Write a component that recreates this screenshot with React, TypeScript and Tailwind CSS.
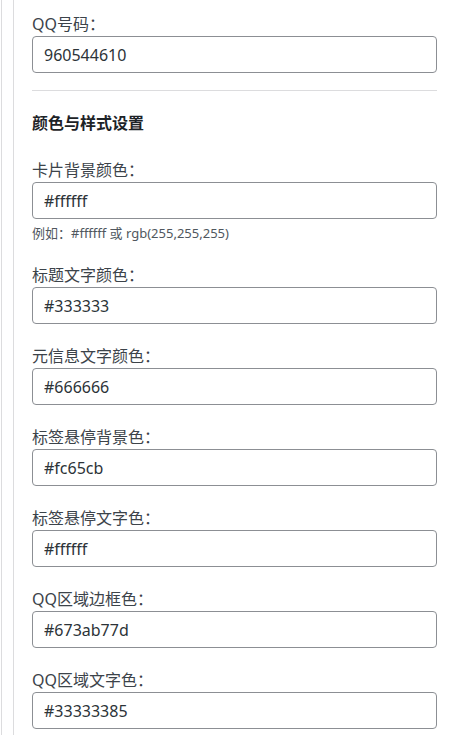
import React from 'react';

interface FieldProps {
  label: string;
  value: string;
  hint?: string;
}

function Field({ label, value, hint }: FieldProps) {
  return (
    <div className="flex flex-col">
      <label className="text-[16px] leading-[24px] text-[#3c434a]">{label}</label>
      <input
        type="text"
        defaultValue={value}
        className="h-[37px] w-full rounded-[4px] border border-[#8c8f94] bg-white px-[11px] text-[16px] text-[#2c3338] outline-none"
      />
      {hint && (
        <p className="mt-[5px] mb-[1px] text-[13px] leading-[18px] text-[#50575e]">{hint}</p>
      )}
    </div>
  );
}

const colorFields: FieldProps[] = [
  { label: '卡片背景颜色：', value: '#ffffff', hint: '例如：#ffffff 或 rgb(255,255,255)' },
  { label: '标题文字颜色：', value: '#333333' },
  { label: '元信息文字颜色：', value: '#666666' },
  { label: '标签悬停背景色：', value: '#fc65cb' },
  { label: '标签悬停文字色：', value: '#ffffff' },
  { label: 'QQ区域边框色：', value: '#673ab77d' },
  { label: 'QQ区域文字色：', value: '#33333385' },
];

export default function App() {
  return (
    <div
      className="min-h-screen bg-white pl-[1px]"
      style={{ fontFamily: '"Noto Sans", "Noto Sans CJK SC", sans-serif' }}
    >
      <div className="min-h-screen border-l border-[#dcdcde] pl-[11px]">
        <div className="min-h-screen border-l border-[#dcdcde] pl-[18px] pr-[14px] pt-[12px] pb-6">
          <Field label="QQ号码：" value="960544610" />

          <hr className="mt-[17px] border-0 border-t border-[#dcdcde]" />

          <h2 className="mt-[20px] text-[16px] font-bold leading-[24px] text-[#1d2327]">
            颜色与样式设置
          </h2>

          <div className="mt-[23px] flex flex-col gap-[20px]">
            {colorFields.map((f) => (
              <Field key={f.label} {...f} />
            ))}
          </div>
        </div>
      </div>
    </div>
  );
}
